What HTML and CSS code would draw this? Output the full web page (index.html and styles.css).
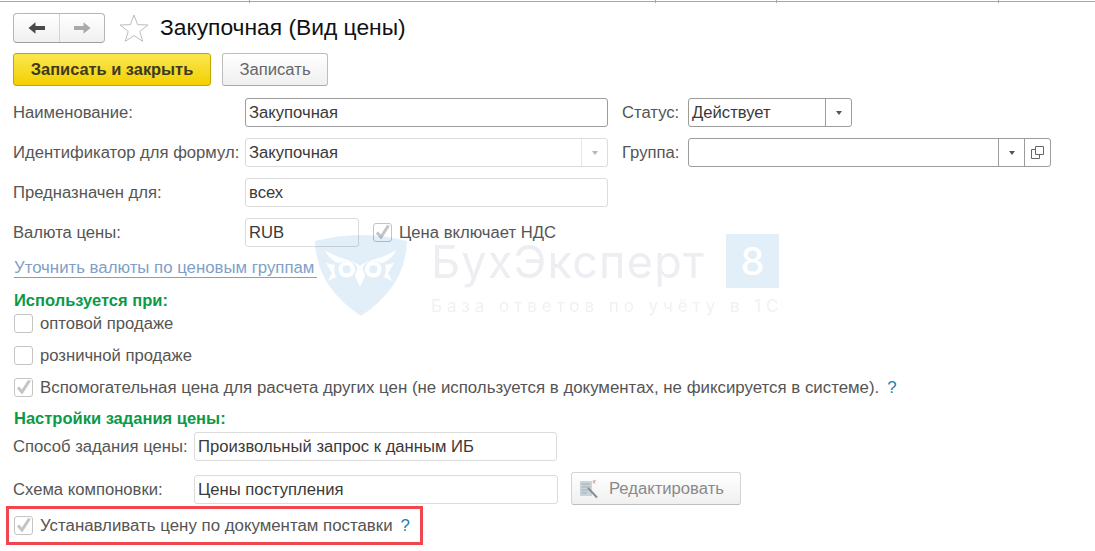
FILE: index.html
```html
<!DOCTYPE html>
<html lang="ru">
<head>
<meta charset="utf-8">
<title>Закупочная (Вид цены)</title>
<link rel="stylesheet" href="styles.css">
</head>
<body>
<div class="topline">
  <i class="tick t1"></i><i class="tick t2"></i><i class="tick t3"></i><i class="tick t4"></i>
</div>
<main class="page">
  <header class="titlebar">
    <div class="nav">
      <span class="nav-btn nav-back">
        <svg width="18" height="14" viewBox="0 0 18 14"><path d="M0.5 7 L7.5 1.2 V5 H17 V9 H7.5 V12.8 Z" fill="#4a4a4a"/></svg>
      </span>
      <span class="nav-btn nav-forward">
        <svg width="18" height="14" viewBox="0 0 18 14"><path d="M17.5 7 L10.5 1.2 V5 H1 V9 H10.5 V12.8 Z" fill="#a9a9a9"/></svg>
      </span>
    </div>
    <svg class="star" width="30" height="28" viewBox="0 0 30 28"><path d="M15 1 L18.6 10.6 L29 11 L20.8 17.4 L23.7 27.3 L15 21.6 L6.3 27.3 L9.2 17.4 L1 11 L11.4 10.6 Z" fill="#fff" stroke="#bdbdbd" stroke-width="1"/></svg>
    <h1 class="title">Закупочная (Вид цены)</h1>
  </header>

  <div class="commands">
    <button class="btn btn-primary">Записать и закрыть</button>
    <button class="btn btn-plain">Записать</button>
  </div>

  <div class="row row-first">
    <span class="label label-main">Наименование:</span>
    <div class="field field-active w-363">Закупочная</div>
    <span class="label label-side">Статус:</span>
    <div class="field field-active w-164 field-combo">
      <span class="field-value">Действует</span>
      <span class="field-btn"><i class="caret"></i></span>
    </div>
  </div>

  <div class="row">
    <span class="label label-main">Идентификатор для формул:</span>
    <div class="field w-363 field-combo">
      <span class="field-value">Закупочная</span>
      <span class="field-btn field-btn-ghost"><i class="caret caret-light"></i></span>
    </div>
    <span class="label label-side">Группа:</span>
    <div class="field field-active w-363 field-combo">
      <span class="field-value"></span>
      <span class="field-btn"><i class="caret"></i></span>
      <span class="field-btn">
        <svg width="13" height="13" viewBox="0 0 13 13" fill="none" stroke="#666"><path d="M4.5 0.5H12.5V8.5H4.5Z"/><path d="M4.5 3.5H0.5V12.5H8.5V8.5"/></svg>
      </span>
    </div>
  </div>

  <div class="row">
    <span class="label label-main">Предназначен для:</span>
    <div class="field w-363">всех</div>
  </div>

  <div class="row">
    <span class="label label-main">Валюта цены:</span>
    <div class="field w-114">RUB</div>
    <label class="check check-inline">
      <span class="box box-on"><svg width="19" height="19" viewBox="0 0 19 19"><path d="M4 9.5 L8 14 L15.5 2.5" fill="none" stroke="#c4c4c4" stroke-width="3"/></svg></span>
      <span>Цена включает НДС</span>
    </label>
  </div>

  <a class="link" href="#">Уточнить валюты по ценовым группам</a>

  <h2 class="section section-first">Используется при:</h2>
  <label class="check check-row"><span class="box"></span><span>оптовой продаже</span></label>
  <label class="check check-row"><span class="box"></span><span>розничной продаже</span></label>
  <label class="check check-row check-long">
    <span class="box box-on"><svg width="19" height="19" viewBox="0 0 19 19"><path d="M4 9.5 L8 14 L15.5 2.5" fill="none" stroke="#c4c4c4" stroke-width="3"/></svg></span>
    <span>Вспомогательная цена для расчета других цен (не используется в документах, не фиксируется в системе).</span>
    <span class="help">?</span>
  </label>

  <h2 class="section section-second">Настройки задания цены:</h2>
  <div class="row row-tight">
    <span class="label label-narrow">Способ задания цены:</span>
    <div class="field w-363">Произвольный запрос к данным ИБ</div>
  </div>
  <div class="row row-scheme">
    <span class="label label-narrow">Схема компоновки:</span>
    <div class="field w-364">Цены поступления</div>
    <button class="btn btn-edit">
      <svg width="20" height="20" viewBox="0 0 20 20"><rect x="1" y="2" width="12" height="15" fill="#c9d3da"/><path d="M2.5 5H11M2.5 8H11M2.5 11H9M2.5 14H8" stroke="#9fb0bb"/><path d="M9 9 L18 18.5" stroke="#8d8d8d" stroke-width="2"/><path d="M14 1.5 L16 4.5 M16.5 1 L14 4" stroke="#d1b6a6" stroke-width="1.2"/></svg>
      Редактировать
    </button>
  </div>

  <div class="callout">
    <label class="check check-long">
      <span class="box box-on"><svg width="19" height="19" viewBox="0 0 19 19"><path d="M4 9.5 L8 14 L15.5 2.5" fill="none" stroke="#c4c4c4" stroke-width="3"/></svg></span>
      <span>Устанавливать цену по документам поставки</span>
      <span class="help">?</span>
    </label>
  </div>
</main>

<aside class="watermark">
  <svg class="wm-shield" width="92" height="82" viewBox="0 0 92 82">
    <path d="M0 7 Q46 -5 92 7 Q91 52 46 82 Q1 52 0 7 Z" fill="#e3eff8"/>
    <path d="M10 16.5 Q20 22 28 24.5 Q39 27 45 32 Q51 27 62 24.5 Q71 22 81 16.5 Q77 25 67 29 L59 26.5 Q50 27 47.5 34 L50 42 L45 53 L40 42 L42.5 34 Q40 27 31 26.5 L23 29 Q14 25 10 16.5 Z" fill="#fff"/>
    <circle cx="31.7" cy="35.3" r="6.2" fill="none" stroke="#fff" stroke-width="4.2"/>
    <circle cx="58.3" cy="35.3" r="6.2" fill="none" stroke="#fff" stroke-width="4.2"/>
    <path d="M11 29 L20 31 Q18 37 21 43 L13 47 L17 39 Z M79 29 L70 31 Q72 37 69 43 L77 47 L73 39 Z" fill="#fff"/>
  </svg>
  <div class="wm-name">БухЭксперт</div>
  <div class="wm-eight">8</div>
  <div class="wm-sub">База ответов по учёту в 1С</div>
</aside>
</body>
</html>
```

FILE: styles.css
```css
* { box-sizing: border-box; }
html, body { margin: 0; padding: 0; }
body {
  position: relative;
  width: 1095px;
  height: 551px;
  overflow: hidden;
  background: #fff;
  font-family: "Liberation Sans", Arial, sans-serif;
  font-size: 16.65px;
  color: #555;
}

.topline { position: relative; height: 2px; border-bottom: 1px solid #a8a8a8; }
.tick { position: absolute; top: 0; width: 1px; height: 3px; background: #a8a8a8; }
.t1 { left: 249px; }
.t2 { left: 655px; }
.t3 { left: 776px; }
.t4 { left: 998px; }

.page { padding: 10px 0 0 13px; }

.titlebar { display: flex; align-items: center; height: 31px; }
.nav {
  display: flex;
  width: 92px;
  height: 30px;
  border: 1px solid #b5b5b5;
  border-bottom-color: #9e9e9e;
  border-radius: 4px;
  background: linear-gradient(#fff, #f0f0f0);
}
.nav-btn { display: flex; align-items: center; justify-content: center; height: 100%; }
.nav-back { width: 46px; border-right: 1px solid #d4d4d4; }
.nav-forward { flex: 1; }
.star { margin-left: 14px; }
.title {
  margin: 0 0 0 11px;
  font-size: 22.8px;
  font-weight: 400;
  color: #111;
  white-space: nowrap;
}

.commands { display: flex; gap: 11px; margin-top: 10px; }
.btn {
  display: flex;
  align-items: center;
  justify-content: center;
  height: 33px;
  padding: 0;
  border-radius: 3px;
  font: inherit;
}
.btn-primary {
  width: 198px;
  border: 1px solid #c4a600;
  background: linear-gradient(#fbe651, #f3d000);
  font-weight: 700;
  font-size: 16.4px;
  color: #3d3a22;
}
.btn-plain {
  width: 106px;
  border: 1px solid #bdbdbd;
  border-bottom-color: #a9a9a9;
  background: linear-gradient(#fff, #efefef);
  color: #666;
}
.btn-edit {
  justify-content: flex-start;
  gap: 10px;
  width: 170px;
  margin: 0 0 2px 13px;
  padding-left: 7px;
  border: 1px solid #d4d4d4;
  border-bottom-color: #bdbdbd;
  background: linear-gradient(#fff, #f0f0f0);
  color: #8a8a8a;
}

.row { display: flex; align-items: center; height: 29px; margin-top: 11px; }
.row-first { margin-top: 12px; }
.row-tight { margin-top: 5px; }
.row-scheme { margin-top: 14px; }
.label { white-space: nowrap; }
.label-main { width: 232px; }
.label-narrow { width: 181px; }
.label-side { width: 66px; margin-left: 14px; }

.field {
  display: flex;
  align-items: center;
  height: 29px;
  padding: 0 0 0 3px;
  border: 1px solid #dcdcdc;
  border-radius: 3px;
  color: #3a3a3a;
  background: transparent;
  white-space: nowrap;
}
.field-active { border-color: #9c9c9c; }
.field-value { flex: 1; }
.field-btn {
  display: flex;
  align-items: center;
  justify-content: center;
  width: 26px;
  height: 100%;
  border-left: 1px solid #9c9c9c;
}
.field-btn-ghost { border-left-color: #e6e6e6; }
.caret {
  width: 0;
  height: 0;
  border-left: 3.5px solid transparent;
  border-right: 3.5px solid transparent;
  border-top: 4px solid #555;
}
.caret-light { border-top-color: #b5b5b5; }
.w-114 { width: 114px; }
.w-164 { width: 164px; }
.w-363 { width: 363px; }
.w-364 { width: 364px; }

.link {
  display: block;
  width: 303px;
  margin: 12px 0 0 1px;
  font-size: 16.8px;
  line-height: 18px;
  color: #7f9fc8;
  text-decoration: none;
  border-bottom: 1px solid #7f9fc8;
  white-space: nowrap;
}

.section {
  margin: 0 0 0 1px;
  font-size: 16.5px;
  line-height: 18px;
  font-weight: 700;
  color: #0a9a48;
}
.section-first { margin-top: 13px; }
.section-second { margin-top: 12px; }

.check { display: flex; align-items: center; gap: 7px; white-space: nowrap; }
.check-inline { margin-left: 14px; }
.check-row { height: 19px; margin: 13px 0 0 1px; }
.section-first + .check-row { margin-top: 5px; }
.check-long { font-size: 16.85px; }
.box {
  display: block;
  flex: none;
  width: 19px;
  height: 19px;
  border: 1px solid #c4c4c4;
  border-radius: 3px;
  background: #fff;
}
.box-on svg { display: block; margin: -1px; }
.help { margin-left: 1px; color: #1f7fae; }

.callout {
  display: flex;
  align-items: center;
  width: 417px;
  height: 39px;
  margin: 2px 0 0 -7px;
  padding-left: 5px;
  border: 3px solid #f1464d;
}

.watermark {
  position: absolute;
  inset: 0;
  pointer-events: none;
  mix-blend-mode: multiply;
}
.wm-shield { position: absolute; left: 315px; top: 234px; }
.wm-name {
  position: absolute;
  left: 431px;
  top: 242px;
  font-family: Inter, "Liberation Sans", sans-serif;
  font-size: 45px;
  line-height: 40px;
  letter-spacing: 1.2px;
  color: #eceef2;
  white-space: nowrap;
}
.wm-eight {
  position: absolute;
  left: 726px;
  top: 234px;
  width: 53px;
  height: 54px;
  background: #e3eff8;
  color: #fff;
  font-family: Inter, "Liberation Sans", sans-serif;
  font-size: 38px;
  font-weight: 500;
  line-height: 54px;
  text-align: center;
}
.wm-sub {
  position: absolute;
  left: 431px;
  top: 296px;
  font-family: Inter, "Liberation Sans", sans-serif;
  font-size: 17px;
  line-height: 20px;
  letter-spacing: 4.95px;
  color: #f0f1f4;
  white-space: nowrap;
}
```
